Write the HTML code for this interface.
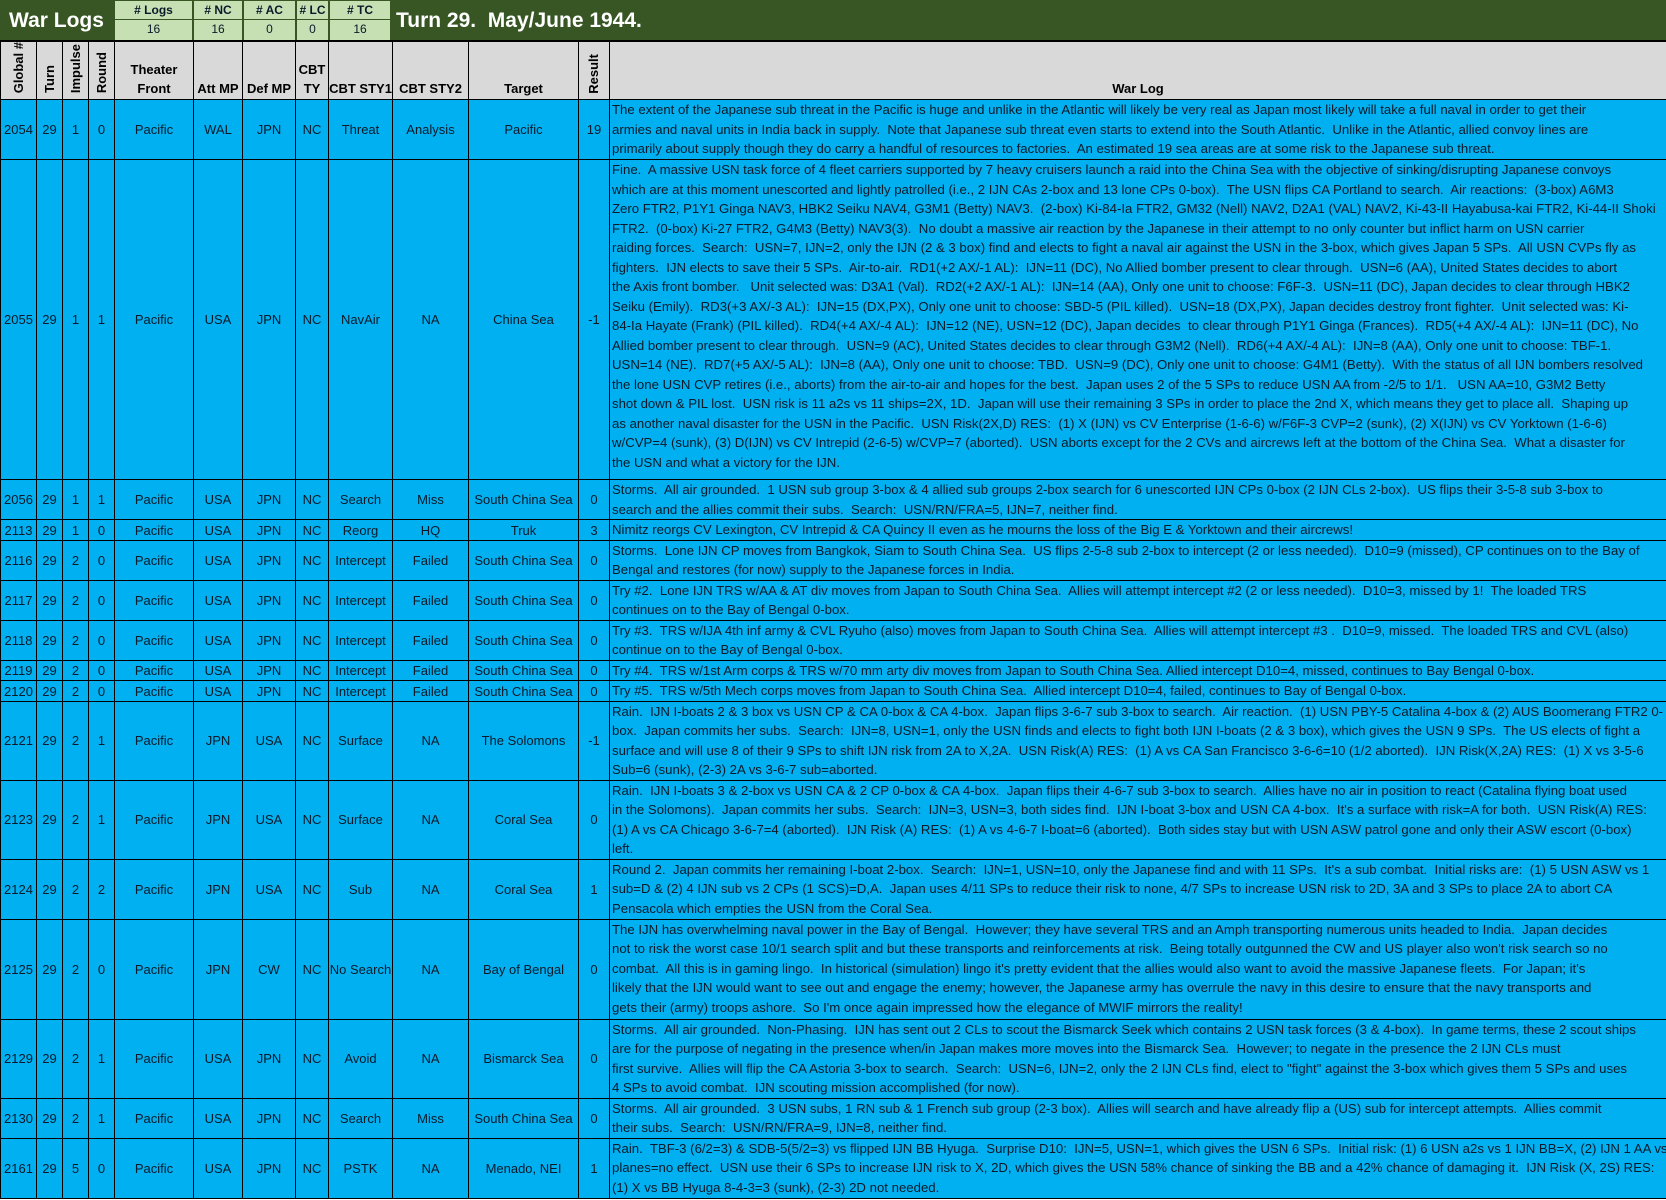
<!DOCTYPE html>
<html><head><meta charset="utf-8">
<style>
*{margin:0;padding:0;box-sizing:border-box}
body{width:1666px;height:1200px;overflow:hidden;background:#fff;font-family:"Liberation Sans",Arial,sans-serif;color:#0a1a2a}
#band{position:absolute;left:0;top:0;width:1666px;height:41px;background:#375623;border-bottom:1px solid #000}
.t1{position:absolute;left:0;top:0;width:113px;height:41px;color:#fff;font-weight:bold;font-size:21px;line-height:41px;text-align:center}
.t2{position:absolute;left:396px;top:0;height:41px;color:#fff;font-weight:bold;font-size:21px;line-height:41px;white-space:nowrap}
.st{position:absolute;top:1px;height:39px;background:#c6e0b4;border-left:2px solid #375623;font-size:12px;text-align:center}
.st div{height:19px;line-height:19px}
.st div.a{font-weight:bold;border-bottom:1px solid #375623}
table{position:absolute;left:0;top:41px;border-collapse:collapse;table-layout:fixed;width:1666px}
td{border:1px solid #000;font-size:13px;text-align:center;vertical-align:middle;white-space:nowrap;overflow:hidden;background:#00b0f0;padding:0}
tr.h td{background:#d9d9d9;font-weight:bold;height:58px;vertical-align:bottom;line-height:19px;padding-bottom:1px;color:#000}
.v{writing-mode:vertical-rl;transform:rotate(180deg);display:inline-block;line-height:24px;text-align:left}
td.l{text-align:left;vertical-align:top;padding-left:2px;line-height:19.5px;font-size:13.2px;letter-spacing:0}
td.l div{white-space:nowrap;overflow:hidden}
</style></head><body>
<div id="band">
<div class="t1">War Logs</div>
<div class="st" style="left:113px;width:79px"><div class="a"># Logs</div><div>16</div></div>
<div class="st" style="left:192px;width:50px"><div class="a"># NC</div><div>16</div></div>
<div class="st" style="left:242px;width:53px"><div class="a"># AC</div><div>0</div></div>
<div class="st" style="left:295px;width:33px"><div class="a"># LC</div><div>0</div></div>
<div class="st" style="left:328px;width:64px;border-right:2px solid #375623"><div class="a"># TC</div><div>16</div></div>
<div class="t2">Turn 29.&nbsp; May/June 1944.</div>
</div>
<table>
<colgroup><col style="width:36px"><col style="width:26px"><col style="width:26px"><col style="width:26px"><col style="width:79px"><col style="width:49px"><col style="width:53px"><col style="width:33px"><col style="width:64px"><col style="width:76px"><col style="width:110px"><col style="width:31px"><col style="width:1057px"></colgroup>
<tr class="h"><td><span class="v">Global #</span></td><td><span class="v">Turn</span></td><td><span class="v">Impulse</span></td><td><span class="v">Round</span></td><td>Theater<br>Front</td><td>Att MP</td><td>Def MP</td><td>CBT<br>TY</td><td>CBT STY1</td><td>CBT STY2</td><td>Target</td><td><span class="v">Result</span></td><td>War Log</td></tr>
<tr style="height:60px"><td>2054</td><td>29</td><td>1</td><td>0</td><td>Pacific</td><td>WAL</td><td>JPN</td><td>NC</td><td>Threat</td><td>Analysis</td><td>Pacific</td><td>19</td><td class="l"><div>The extent of the Japanese sub threat in the Pacific is huge and unlike in the Atlantic will likely be very real as Japan most likely will take a full naval in order to get their</div><div>armies and naval units in India back in supply.&nbsp; Note that Japanese sub threat even starts to extend into the South Atlantic.&nbsp; Unlike in the Atlantic, allied convoy lines are</div><div>primarily about supply though they do carry a handful of resources to factories.&nbsp; An estimated 19 sea areas are at some risk to the Japanese sub threat.</div></td></tr>
<tr style="height:320px"><td>2055</td><td>29</td><td>1</td><td>1</td><td>Pacific</td><td>USA</td><td>JPN</td><td>NC</td><td>NavAir</td><td>NA</td><td>China Sea</td><td>-1</td><td class="l"><div>Fine.&nbsp; A massive USN task force of 4 fleet carriers supported by 7 heavy cruisers launch a raid into the China Sea with the objective of sinking/disrupting Japanese convoys</div><div>which are at this moment unescorted and lightly patrolled (i.e., 2 IJN CAs 2-box and 13 lone CPs 0-box).&nbsp; The USN flips CA Portland to search.&nbsp; Air reactions:&nbsp; (3-box) A6M3</div><div>Zero FTR2, P1Y1 Ginga NAV3, HBK2 Seiku NAV4, G3M1 (Betty) NAV3.&nbsp; (2-box) Ki-84-Ia FTR2, GM32 (Nell) NAV2, D2A1 (VAL) NAV2, Ki-43-II Hayabusa-kai FTR2, Ki-44-II Shoki</div><div>FTR2.&nbsp; (0-box) Ki-27 FTR2, G4M3 (Betty) NAV3(3).&nbsp; No doubt a massive air reaction by the Japanese in their attempt to no only counter but inflict harm on USN carrier</div><div>raiding forces.&nbsp; Search:&nbsp; USN=7, IJN=2, only the IJN (2 &amp; 3 box) find and elects to fight a naval air against the USN in the 3-box, which gives Japan 5 SPs.&nbsp; All USN CVPs fly as</div><div>fighters.&nbsp; IJN elects to save their 5 SPs.&nbsp; Air-to-air.&nbsp; RD1(+2 AX/-1 AL):&nbsp; IJN=11 (DC), No Allied bomber present to clear through.&nbsp; USN=6 (AA), United States decides to abort</div><div>the Axis front bomber.&nbsp;&nbsp; Unit selected was: D3A1 (Val).&nbsp; RD2(+2 AX/-1 AL):&nbsp; IJN=14 (AA), Only one unit to choose: F6F-3.&nbsp; USN=11 (DC), Japan decides to clear through HBK2</div><div>Seiku (Emily).&nbsp; RD3(+3 AX/-3 AL):&nbsp; IJN=15 (DX,PX), Only one unit to choose: SBD-5 (PIL killed).&nbsp; USN=18 (DX,PX), Japan decides destroy front fighter.&nbsp; Unit selected was: Ki-</div><div>84-Ia Hayate (Frank) (PIL killed).&nbsp; RD4(+4 AX/-4 AL):&nbsp; IJN=12 (NE), USN=12 (DC), Japan decides&nbsp; to clear through P1Y1 Ginga (Frances).&nbsp; RD5(+4 AX/-4 AL):&nbsp; IJN=11 (DC), No</div><div>Allied bomber present to clear through.&nbsp; USN=9 (AC), United States decides to clear through G3M2 (Nell).&nbsp; RD6(+4 AX/-4 AL):&nbsp; IJN=8 (AA), Only one unit to choose: TBF-1.</div><div>USN=14 (NE).&nbsp; RD7(+5 AX/-5 AL):&nbsp; IJN=8 (AA), Only one unit to choose: TBD.&nbsp; USN=9 (DC), Only one unit to choose: G4M1 (Betty).&nbsp; With the status of all IJN bombers resolved</div><div>the lone USN CVP retires (i.e., aborts) from the air-to-air and hopes for the best.&nbsp; Japan uses 2 of the 5 SPs to reduce USN AA from -2/5 to 1/1.&nbsp;&nbsp; USN AA=10, G3M2 Betty</div><div>shot down &amp; PIL lost.&nbsp; USN risk is 11 a2s vs 11 ships=2X, 1D.&nbsp; Japan will use their remaining 3 SPs in order to place the 2nd X, which means they get to place all.&nbsp; Shaping up</div><div>as another naval disaster for the USN in the Pacific.&nbsp; USN Risk(2X,D) RES:&nbsp; (1) X (IJN) vs CV Enterprise (1-6-6) w/F6F-3 CVP=2 (sunk), (2) X(IJN) vs CV Yorktown (1-6-6)</div><div>w/CVP=4 (sunk), (3) D(IJN) vs CV Intrepid (2-6-5) w/CVP=7 (aborted).&nbsp; USN aborts except for the 2 CVs and aircrews left at the bottom of the China Sea.&nbsp; What a disaster for</div><div>the USN and what a victory for the IJN.</div></td></tr>
<tr style="height:40px"><td>2056</td><td>29</td><td>1</td><td>1</td><td>Pacific</td><td>USA</td><td>JPN</td><td>NC</td><td>Search</td><td>Miss</td><td>South China Sea</td><td>0</td><td class="l"><div>Storms.&nbsp; All air grounded.&nbsp; 1 USN sub group 3-box &amp; 4 allied sub groups 2-box search for 6 unescorted IJN CPs 0-box (2 IJN CLs 2-box).&nbsp; US flips their 3-5-8 sub 3-box to</div><div>search and the allies commit their subs.&nbsp; Search:&nbsp; USN/RN/FRA=5, IJN=7, neither find.</div></td></tr>
<tr style="height:20px"><td>2113</td><td>29</td><td>1</td><td>0</td><td>Pacific</td><td>USA</td><td>JPN</td><td>NC</td><td>Reorg</td><td>HQ</td><td>Truk</td><td>3</td><td class="l"><div>Nimitz reorgs CV Lexington, CV Intrepid &amp; CA Quincy II even as he mourns the loss of the Big E &amp; Yorktown and their aircrews!</div></td></tr>
<tr style="height:40px"><td>2116</td><td>29</td><td>2</td><td>0</td><td>Pacific</td><td>USA</td><td>JPN</td><td>NC</td><td>Intercept</td><td>Failed</td><td>South China Sea</td><td>0</td><td class="l"><div>Storms.&nbsp; Lone IJN CP moves from Bangkok, Siam to South China Sea.&nbsp; US flips 2-5-8 sub 2-box to intercept (2 or less needed).&nbsp; D10=9 (missed), CP continues on to the Bay of</div><div>Bengal and restores (for now) supply to the Japanese forces in India.</div></td></tr>
<tr style="height:40px"><td>2117</td><td>29</td><td>2</td><td>0</td><td>Pacific</td><td>USA</td><td>JPN</td><td>NC</td><td>Intercept</td><td>Failed</td><td>South China Sea</td><td>0</td><td class="l"><div>Try #2.&nbsp; Lone IJN TRS w/AA &amp; AT div moves from Japan to South China Sea.&nbsp; Allies will attempt intercept #2 (2 or less needed).&nbsp; D10=3, missed by 1!&nbsp; The loaded TRS</div><div>continues on to the Bay of Bengal 0-box.</div></td></tr>
<tr style="height:40px"><td>2118</td><td>29</td><td>2</td><td>0</td><td>Pacific</td><td>USA</td><td>JPN</td><td>NC</td><td>Intercept</td><td>Failed</td><td>South China Sea</td><td>0</td><td class="l"><div>Try #3.&nbsp; TRS w/IJA 4th inf army &amp; CVL Ryuho (also) moves from Japan to South China Sea.&nbsp; Allies will attempt intercept #3 .&nbsp; D10=9, missed.&nbsp; The loaded TRS and CVL (also)</div><div>continue on to the Bay of Bengal 0-box.</div></td></tr>
<tr style="height:20px"><td>2119</td><td>29</td><td>2</td><td>0</td><td>Pacific</td><td>USA</td><td>JPN</td><td>NC</td><td>Intercept</td><td>Failed</td><td>South China Sea</td><td>0</td><td class="l"><div>Try #4.&nbsp; TRS w/1st Arm corps &amp; TRS w/70 mm arty div moves from Japan to South China Sea. Allied intercept D10=4, missed, continues to Bay Bengal 0-box.</div></td></tr>
<tr style="height:20px"><td>2120</td><td>29</td><td>2</td><td>0</td><td>Pacific</td><td>USA</td><td>JPN</td><td>NC</td><td>Intercept</td><td>Failed</td><td>South China Sea</td><td>0</td><td class="l"><div>Try #5.&nbsp; TRS w/5th Mech corps moves from Japan to South China Sea.&nbsp; Allied intercept D10=4, failed, continues to Bay of Bengal 0-box.</div></td></tr>
<tr style="height:79px"><td>2121</td><td>29</td><td>2</td><td>1</td><td>Pacific</td><td>JPN</td><td>USA</td><td>NC</td><td>Surface</td><td>NA</td><td>The Solomons</td><td>-1</td><td class="l"><div>Rain.&nbsp; IJN I-boats 2 &amp; 3 box vs USN CP &amp; CA 0-box &amp; CA 4-box.&nbsp; Japan flips 3-6-7 sub 3-box to search.&nbsp; Air reaction.&nbsp; (1) USN PBY-5 Catalina 4-box &amp; (2) AUS Boomerang FTR2 0-</div><div>box.&nbsp; Japan commits her subs.&nbsp; Search:&nbsp; IJN=8, USN=1, only the USN finds and elects to fight both IJN I-boats (2 &amp; 3 box), which gives the USN 9 SPs.&nbsp; The US elects of fight a</div><div>surface and will use 8 of their 9 SPs to shift IJN risk from 2A to X,2A.&nbsp; USN Risk(A) RES:&nbsp; (1) A vs CA San Francisco 3-6-6=10 (1/2 aborted).&nbsp; IJN Risk(X,2A) RES:&nbsp; (1) X vs 3-5-6</div><div>Sub=6 (sunk), (2-3) 2A vs 3-6-7 sub=aborted.</div></td></tr>
<tr style="height:79px"><td>2123</td><td>29</td><td>2</td><td>1</td><td>Pacific</td><td>JPN</td><td>USA</td><td>NC</td><td>Surface</td><td>NA</td><td>Coral Sea</td><td>0</td><td class="l"><div>Rain.&nbsp; IJN I-boats 3 &amp; 2-box vs USN CA &amp; 2 CP 0-box &amp; CA 4-box.&nbsp; Japan flips their 4-6-7 sub 3-box to search.&nbsp; Allies have no air in position to react (Catalina flying boat used</div><div>in the Solomons).&nbsp; Japan commits her subs.&nbsp; Search:&nbsp; IJN=3, USN=3, both sides find.&nbsp; IJN I-boat 3-box and USN CA 4-box.&nbsp; It's a surface with risk=A for both.&nbsp; USN Risk(A) RES:</div><div>(1) A vs CA Chicago 3-6-7=4 (aborted).&nbsp; IJN Risk (A) RES:&nbsp; (1) A vs 4-6-7 I-boat=6 (aborted).&nbsp; Both sides stay but with USN ASW patrol gone and only their ASW escort (0-box)</div><div>left.</div></td></tr>
<tr style="height:60px"><td>2124</td><td>29</td><td>2</td><td>2</td><td>Pacific</td><td>JPN</td><td>USA</td><td>NC</td><td>Sub</td><td>NA</td><td>Coral Sea</td><td>1</td><td class="l"><div>Round 2.&nbsp; Japan commits her remaining I-boat 2-box.&nbsp; Search:&nbsp; IJN=1, USN=10, only the Japanese find and with 11 SPs.&nbsp; It's a sub combat.&nbsp; Initial risks are:&nbsp; (1) 5 USN ASW vs 1</div><div>sub=D &amp; (2) 4 IJN sub vs 2 CPs (1 SCS)=D,A.&nbsp; Japan uses 4/11 SPs to reduce their risk to none, 4/7 SPs to increase USN risk to 2D, 3A and 3 SPs to place 2A to abort CA</div><div>Pensacola which empties the USN from the Coral Sea.</div></td></tr>
<tr style="height:100px"><td>2125</td><td>29</td><td>2</td><td>0</td><td>Pacific</td><td>JPN</td><td>CW</td><td>NC</td><td>No Search</td><td>NA</td><td>Bay of Bengal</td><td>0</td><td class="l"><div>The IJN has overwhelming naval power in the Bay of Bengal.&nbsp; However; they have several TRS and an Amph transporting numerous units headed to India.&nbsp; Japan decides</div><div>not to risk the worst case 10/1 search split and but these transports and reinforcements at risk.&nbsp; Being totally outgunned the CW and US player also won't risk search so no</div><div>combat.&nbsp; All this is in gaming lingo.&nbsp; In historical (simulation) lingo it's pretty evident that the allies would also want to avoid the massive Japanese fleets.&nbsp; For Japan; it's</div><div>likely that the IJN would want to see out and engage the enemy; however, the Japanese army has overrule the navy in this desire to ensure that the navy transports and</div><div>gets their (army) troops ashore.&nbsp; So I'm once again impressed how the elegance of MWIF mirrors the reality!</div></td></tr>
<tr style="height:79px"><td>2129</td><td>29</td><td>2</td><td>1</td><td>Pacific</td><td>USA</td><td>JPN</td><td>NC</td><td>Avoid</td><td>NA</td><td>Bismarck Sea</td><td>0</td><td class="l"><div>Storms.&nbsp; All air grounded.&nbsp; Non-Phasing.&nbsp; IJN has sent out 2 CLs to scout the Bismarck Seek which contains 2 USN task forces (3 &amp; 4-box).&nbsp; In game terms, these 2 scout ships</div><div>are for the purpose of negating in the presence when/in Japan makes more moves into the Bismarck Sea.&nbsp; However; to negate in the presence the 2 IJN CLs must</div><div>first survive.&nbsp; Allies will flip the CA Astoria 3-box to search.&nbsp; Search:&nbsp; USN=6, IJN=2, only the 2 IJN CLs find, elect to "fight" against the 3-box which gives them 5 SPs and uses</div><div>4 SPs to avoid combat.&nbsp; IJN scouting mission accomplished (for now).</div></td></tr>
<tr style="height:40px"><td>2130</td><td>29</td><td>2</td><td>1</td><td>Pacific</td><td>USA</td><td>JPN</td><td>NC</td><td>Search</td><td>Miss</td><td>South China Sea</td><td>0</td><td class="l"><div>Storms.&nbsp; All air grounded.&nbsp; 3 USN subs, 1 RN sub &amp; 1 French sub group (2-3 box).&nbsp; Allies will search and have already flip a (US) sub for intercept attempts.&nbsp; Allies commit</div><div>their subs.&nbsp; Search:&nbsp; USN/RN/FRA=9, IJN=8, neither find.</div></td></tr>
<tr style="height:60px"><td>2161</td><td>29</td><td>5</td><td>0</td><td>Pacific</td><td>USA</td><td>JPN</td><td>NC</td><td>PSTK</td><td>NA</td><td>Menado, NEI</td><td>1</td><td class="l"><div>Rain.&nbsp; TBF-3 (6/2=3) &amp; SDB-5(5/2=3) vs flipped IJN BB Hyuga.&nbsp; Surprise D10:&nbsp; IJN=5, USN=1, which gives the USN 6 SPs.&nbsp; Initial risk: (1) 6 USN a2s vs 1 IJN BB=X, (2) IJN 1 AA vs 2</div><div>planes=no effect.&nbsp; USN use their 6 SPs to increase IJN risk to X, 2D, which gives the USN 58% chance of sinking the BB and a 42% chance of damaging it.&nbsp; IJN Risk (X, 2S) RES:</div><div>(1) X vs BB Hyuga 8-4-3=3 (sunk), (2-3) 2D not needed.</div></td></tr>
</table>
</body></html>
